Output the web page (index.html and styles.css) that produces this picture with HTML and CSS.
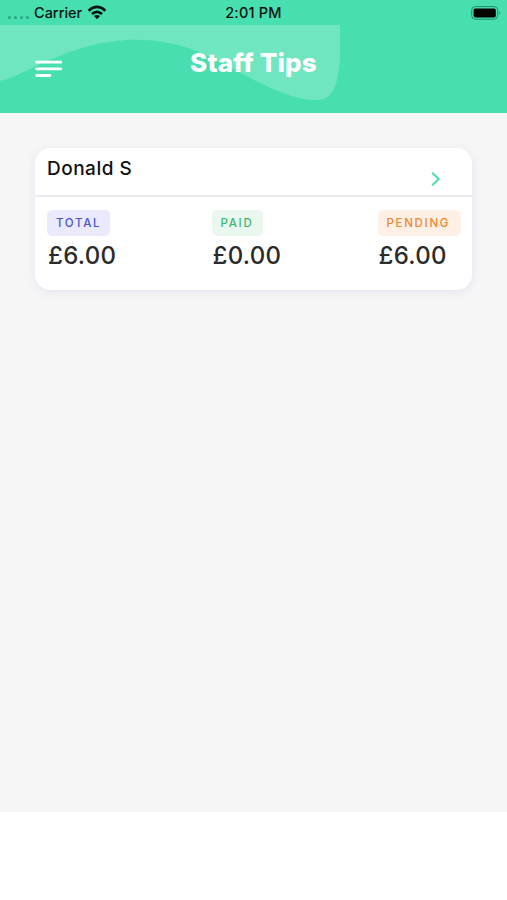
FILE: index.html
```html
<!DOCTYPE html>
<html lang="en">
<head>
<meta charset="utf-8">
<title>Staff Tips</title>
<link rel="stylesheet" href="styles.css">
</head>
<body>
<div class="app">
  <div class="status">
    <div class="carrier">
      <span class="dots"><i></i><i></i><i></i><i></i></span>
      <span class="carrier-name">Carrier</span>
      <svg class="wifi" width="20" height="15" viewBox="0 0 20 15">
        <g fill="none" stroke="#06140f" stroke-width="2.7">
          <path d="M1.6 5.7Q10 -1.9 18.4 5.7"/>
          <path d="M4.9 9.1Q10 4.5 15.1 9.1"/>
        </g>
        <path fill="#06140f" d="M6.9 11.1Q10 8.7 13.1 11.1L10 14.3Z"/>
      </svg>
    </div>
    <span class="time">2:01 PM</span>
    <svg class="battery" width="30" height="14" viewBox="0 0 30 14">
      <rect x=".7" y=".6" width="26" height="12.6" rx="3.6" fill="none" stroke="#248a67"/>
      <rect x="2.6" y="2.4" width="22.2" height="9" rx="1.6" fill="#000"/>
      <path d="M28.2 4.8Q30 6.9 28.2 9Z" fill="#248a67"/>
    </svg>
  </div>
  <header class="header">
    <svg class="wave" width="340" height="88" viewBox="0 0 340 88">
      <path fill="#6fe6c0" d="M0 0H340V28C339 60 333 75 317 75C283 75 246 49 205 30C178 17 152 14 126 15C92 17 64 28 34 42C20 49 9 54 0 56Z"/>
    </svg>
    <svg class="menu" width="28" height="18" viewBox="0 0 28 18" stroke="#fff" stroke-width="2.8" stroke-linecap="round">
      <path d="M1.6 2.2H25.8M1.6 8.9H25.8M1.6 15.5H15"/>
    </svg>
    <h1 class="title">Staff Tips</h1>
  </header>
  <main class="content">
    <section class="card">
      <div class="card-head">
        <span class="name">Donald S</span>
        <svg class="chevron" width="10" height="14" viewBox="0 0 10 14" fill="none" stroke="#48dfb0" stroke-width="2" stroke-linecap="round" stroke-linejoin="round">
          <path d="M1.7 1.2L7.8 7L1.7 12.8"/>
        </svg>
      </div>
      <div class="stats">
        <div class="stat"><span class="tag total">TOTAL</span><span class="amount">£6.00</span></div>
        <div class="stat"><span class="tag paid">PAID</span><span class="amount">£0.00</span></div>
        <div class="stat"><span class="tag pending">PENDING</span><span class="amount">£6.00</span></div>
      </div>
    </section>
  </main>
</div>
</body>
</html>
```
FILE: styles.css
```css
* { box-sizing: border-box; }
body { margin: 0; background: #fff; font-family: Inter, "Liberation Sans", sans-serif; }
.app { height: 812px; background: #f6f6f7; }
.status {
  display: grid; grid-template-columns: 1fr auto 1fr; align-items: center;
  height: 25px; padding: 0 6px 0 8px; background: #48dfb0; color: #06140f;
  font-size: 14.5px; line-height: 25px;
}
.carrier { display: flex; align-items: center; }
.dots { display: flex; gap: 3px; margin: 9px 5px 0 0; }
.dots i { width: 3px; height: 3px; border-radius: 50%; background: #2fa381; }
.carrier-name { font-weight: 500; }
.wifi { margin-left: 5px; }
.time { position: relative; left: -1px; font-weight: 500; letter-spacing: .2px; }
.battery { justify-self: end; }
.header {
  position: relative; display: grid; grid-template-columns: 1fr auto 1fr;
  height: 88px; padding: 0 35px; background: #48dfb0;
}
.wave { position: absolute; left: 0; top: 0; }
.menu { position: relative; margin-top: 35px; }
.title {
  position: relative; margin: 22px 0 0; color: #fff;
  font-size: 26px; line-height: 32px; font-weight: 800; letter-spacing: .2px;
}
.content { padding: 35px; }
.card {
  height: 142px; border-radius: 15px; background: #fff;
  box-shadow: 0 2px 8px rgba(90, 90, 190, .12);
}
.card-head {
  display: flex; justify-content: space-between; height: 49px;
  padding: 8px 31px 0 12px; border-bottom: 2px solid #ececee;
}
.name { padding-top: 1px; font-size: 19px; line-height: 24px; font-weight: 500; letter-spacing: .5px; color: #111; }
.chevron { margin-top: 16px; }
.stats { display: grid; grid-template-columns: 164.5px 166px 1fr; padding: 13px 0 0 12px; }
.stat { display: flex; flex-direction: column; align-items: flex-start; }
.tag {
  height: 26px; padding: 0 0 0 9px; border-radius: 5px; white-space: nowrap;
  font-size: 11.5px; line-height: 26px; font-weight: 500; letter-spacing: 1.7px;
}
.total { width: 63px; color: #4a55cf; background: #ebeafd; }
.paid { width: 51px; color: #3db86b; background: #e9f7ef; }
.pending { width: 83px; color: #f0862e; background: #fef0e5; }
.amount { margin: 5px 0 0 1px; font-size: 24px; line-height: 30px; font-weight: 500; letter-spacing: .3px; color: #2b2b2b; }
```
